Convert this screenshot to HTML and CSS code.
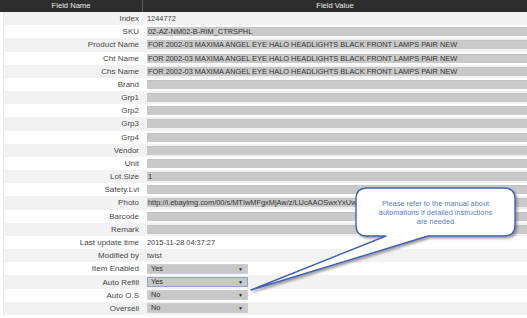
FILE: index.html
```html
<!DOCTYPE html>
<html lang="en">
<head>
    <meta charset="UTF-8">
    <title>Item Detail</title>
    <link rel="stylesheet" href="styles.css">
</head>
<body>
    <div class="page">
        <div class="sheet">
            <div class="row head">
                <div class="name">Field Name</div>
                <div class="value">Field Value</div>
            </div>
            <div class="row"><div class="name">Index</div><div class="value"><span class="plain">1244772</span></div></div>
            <div class="row"><div class="name">SKU</div><div class="value"><div class="field">02-AZ-NM02-B-RIM_CTRSPHL</div></div></div>
            <div class="row"><div class="name">Product Name</div><div class="value"><div class="field">FOR 2002-03 MAXIMA ANGEL EYE HALO HEADLIGHTS BLACK FRONT LAMPS PAIR NEW</div></div></div>
            <div class="row"><div class="name">Cht Name</div><div class="value"><div class="field">FOR 2002-03 MAXIMA ANGEL EYE HALO HEADLIGHTS BLACK FRONT LAMPS PAIR NEW</div></div></div>
            <div class="row"><div class="name">Chs Name</div><div class="value"><div class="field">FOR 2002-03 MAXIMA ANGEL EYE HALO HEADLIGHTS BLACK FRONT LAMPS PAIR NEW</div></div></div>
            <div class="row"><div class="name">Brand</div><div class="value"><div class="field"></div></div></div>
            <div class="row"><div class="name">Grp1</div><div class="value"><div class="field"></div></div></div>
            <div class="row"><div class="name">Grp2</div><div class="value"><div class="field"></div></div></div>
            <div class="row"><div class="name">Grp3</div><div class="value"><div class="field"></div></div></div>
            <div class="row"><div class="name">Grp4</div><div class="value"><div class="field"></div></div></div>
            <div class="row"><div class="name">Vendor</div><div class="value"><div class="field"></div></div></div>
            <div class="row"><div class="name">Unit</div><div class="value"><div class="field"></div></div></div>
            <div class="row"><div class="name">Lot.Size</div><div class="value"><div class="field">1</div></div></div>
            <div class="row"><div class="name">Safety.Lvl</div><div class="value"><div class="field"></div></div></div>
            <div class="row"><div class="name">Photo</div><div class="value"><div class="field">http://i.ebayimg.com/00/s/MTIwMFgxMjAw/z/LUcAAOSwxYxUw</div></div></div>
            <div class="row"><div class="name">Barcode</div><div class="value"><div class="field"></div></div></div>
            <div class="row"><div class="name">Remark</div><div class="value"><div class="field"></div></div></div>
            <div class="row"><div class="name">Last update time</div><div class="value"><span class="plain">2015-11-28 04:37:27</span></div></div>
            <div class="row"><div class="name">Modified by</div><div class="value"><span class="plain">twist</span></div></div>
            <div class="row"><div class="name">Item Enabled</div><div class="value"><div class="pick"><span>Yes</span><span class="caret">&#9660;</span></div></div></div>
            <div class="row"><div class="name">Auto Refill</div><div class="value"><div class="pick focus"><span>Yes</span><span class="caret">&#9660;</span></div></div></div>
            <div class="row"><div class="name">Auto O.S</div><div class="value"><div class="pick"><span>No</span><span class="caret">&#9660;</span></div></div></div>
            <div class="row"><div class="name">Oversell</div><div class="value"><div class="pick"><span>No</span><span class="caret">&#9660;</span></div></div></div>
        </div>

        <!-- callout note pointing at the automation selects -->
        <svg class="callout" width="527" height="318" viewBox="0 0 527 318">
            <defs>
                <filter id="shade" x="-10%" y="-10%" width="130%" height="140%">
                    <feDropShadow dx="2" dy="2" stdDeviation="1.2" flood-color="#6b6b6b" flood-opacity="0.6"/>
                </filter>
            </defs>
            <path d="M367 188 H504 Q515 188 515 199 V225 Q515 236 504 236 H428 L251 290 L386 236 H367 Q356 236 356 225 V199 Q356 188 367 188 Z"
                  fill="#ffffff" stroke="#3f64b1" stroke-width="1.4" stroke-linejoin="round" filter="url(#shade)"/>
        </svg>
        <div class="note">Please refer to the manual about<br>automations if detailed instructions<br>are needed</div>
    </div>
</body>
</html>
```

FILE: styles.css
```css
* {
    margin: 0;
    padding: 0;
    box-sizing: border-box;
}

body {
    font-family: "Liberation Sans", Arial, sans-serif;
    font-size: 8px;
    color: #444;
    background: #fff;
    overflow: hidden;
}

.page {
    position: relative;
    width: 527px;
    height: 318px;
}

.sheet {
    display: flex;
    flex-direction: column;
}

.row {
    display: grid;
    grid-template-columns: 143px 1fr;
    height: 13.18px;
    align-items: center;
    background: #fff;
    box-shadow: inset 3px 0 0 #fff, inset 4px 0 0 #e6e6e6;
}

.row:nth-child(even) {
    background: #f2f2f2;
}

.name {
    text-align: right;
    padding-right: 4px;
    color: #474747;
    white-space: nowrap;
}

.value {
    padding-left: 4px;
    white-space: nowrap;
    overflow: hidden;
    font-size: 7.4px;
}

.row.head {
    height: 12px;
    background: #2d2d2d;
    box-shadow: none;
}

.head .name,
.head .value {
    text-align: center;
    padding: 0;
    height: 100%;
    line-height: 12px;
    font-size: 7.6px;
    color: #eeeeee;
}

.head .name {
    border-right: 1px solid #5a5a5a;
}

.plain {
    color: #444;
}

.field {
    height: 9px;
    line-height: 8px;
    background: #c9c9c9;
    border-top: 1px solid #c2c2c2;
    color: #333;
    padding-left: 1px;
    overflow: hidden;
}

.pick {
    width: 101px;
    height: 10px;
    line-height: 8px;
    background: #c8c8c8;
    border: 1px solid #cfcfcf;
    color: #333;
    display: flex;
    justify-content: space-between;
    padding: 0 4px 0 3px;
}

.pick.focus {
    border-color: #8ea4cf;
}

.caret {
    font-size: 5px;
    color: #222;
}

.callout {
    position: absolute;
    left: 0;
    top: 0;
    pointer-events: none;
}

.note {
    position: absolute;
    left: 356px;
    top: 200px;
    width: 159px;
    text-align: center;
    font-size: 7.4px;
    line-height: 8.8px;
    color: #5a7cc2;
}
```
